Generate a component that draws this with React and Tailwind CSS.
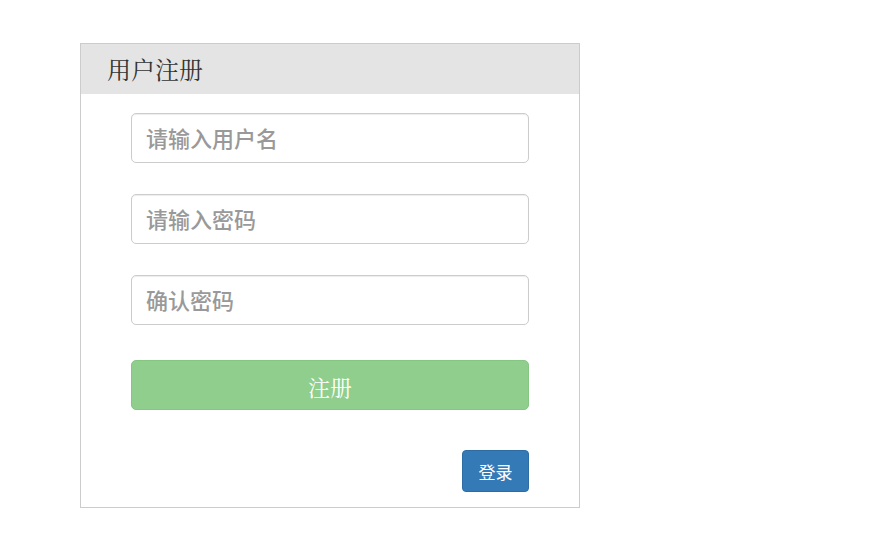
export default function App() {
  const inputCls = "h-[50px] w-full rounded-[5px] border border-[#cccccc] px-[14px] pt-[3px] text-[22px] font-medium text-[#555] placeholder:text-[#999999] outline-none shadow-[inset_0_1px_1px_rgba(0,0,0,0.075)]";
  return (
    <div className="min-h-[543px] bg-white pt-[43px] pl-[80px]" style={{ fontFamily: '"Liberation Sans", "Noto Sans CJK SC", sans-serif' }}>
      <div className="w-[500px] border border-[#cccccc] bg-white">
        <div className="h-[50px] bg-[#e4e4e4] pl-[26px] pt-[3px] flex items-center">
          <h3 className="text-[24px] text-[#333333] leading-none" style={{ fontFamily: '"Liberation Serif", "Noto Serif CJK SC", "Noto Sans CJK SC", serif' }}>用户注册</h3>
        </div>
        <div className="px-[50px] pt-[19px] pb-[15px] flex flex-col">
          <input className={inputCls} placeholder="请输入用户名" />
          <input type="password" className={"mt-[31px] " + inputCls} placeholder="请输入密码" />
          <input type="password" className={"mt-[31px] " + inputCls} placeholder="确认密码" />
          <button className="mt-[35px] h-[50px] w-full rounded-[5px] bg-[#8fce8c] border border-[#86c683] text-white text-[22px] pt-[8px] leading-none" style={{ fontFamily: '"Liberation Serif", "Noto Serif CJK SC", "Noto Sans CJK SC", serif' }}>注册</button>
          <div className="mt-[40px] flex justify-end">
            <button className="h-[42px] w-[67px] rounded-[4px] bg-[#337ab7] border border-[#2e6da4] text-white text-[17px] pt-[4px] leading-none">登录</button>
          </div>
        </div>
      </div>
    </div>
  );
}
